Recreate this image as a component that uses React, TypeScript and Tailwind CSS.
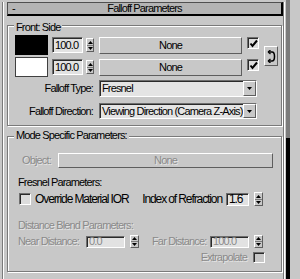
import React from 'react';

// 3ds Max style "Falloff Parameters" rollout

const sunken =
  'border border-t-[#6e6e6e] border-l-[#6e6e6e] border-b-white border-r-white shadow-[inset_1px_1px_0_#2a2a2a]';
const raised =
  'border border-t-white border-l-white border-b-[#5e5e5e] border-r-[#5e5e5e] bg-[#c8c8c8]';
const dim = 'text-[#8a8a8a] [text-shadow:1px_1px_0_#e4e4e4]';

const Field = ({ value, className, disabled }: { value: string; className: string; disabled?: boolean }) => (
  <div className={`flex-none flex items-center pl-[2px] overflow-hidden bg-[#e2e2e2] ${sunken} ${disabled ? dim : ''} ${className}`}>
    {value}
  </div>
);

const Spinner = ({ className }: { className: string }) => (
  <div className={`flex-none flex flex-col items-center justify-center gap-[1px] ${raised} ${className}`}>
    <svg width="5" height="3" viewBox="0 0 5 3">
      <path d="M2.5 0 L5 3 H0 Z" fill="#000" />
    </svg>
    <div className="w-full h-px bg-[#7a7a7a]" />
    <svg width="5" height="3" viewBox="0 0 5 3">
      <path d="M0 0 H5 L2.5 3 Z" fill="#000" />
    </svg>
  </div>
);

const Button = ({ children, className, disabled }: { children: React.ReactNode; className: string; disabled?: boolean }) => (
  <div className={`flex-none flex items-center justify-center ${raised} ${disabled ? dim : ''} ${className}`}>
    {children}
  </div>
);

const Check = ({ checked, className, disabled }: { checked?: boolean; className: string; disabled?: boolean }) => (
  <div className={`flex-none flex items-center justify-center ${sunken} ${disabled ? 'bg-[#c8c8c8]' : 'bg-[#dcdcdc]'} ${className}`}>
    {checked && (
      <svg width="9" height="9" viewBox="0 0 9 9">
        <path d="M1.5 4.5 L3.5 7 L8 1.5" fill="none" stroke="#000" strokeWidth="2" />
      </svg>
    )}
  </div>
);

const Dropdown = ({ children, className }: { children: React.ReactNode; className: string }) => (
  <div className={`flex-none flex items-stretch bg-[#e4e4e4] ${sunken} ${className}`}>
    <span className="flex-1 pl-[2px] flex items-center overflow-hidden">{children}</span>
    <div className={`w-[13px] flex-none flex items-center justify-center ${raised}`}>
      <svg width="5" height="3" viewBox="0 0 5 3">
        <path d="M0 0 H5 L2.5 3 Z" fill="#000" />
      </svg>
    </div>
  </div>
);

const ColorRow = ({ swatch }: { swatch: string }) => (
  <div className="flex items-start">
    <div className={`flex-none w-[33px] h-[20px] border ${swatch}`} />
    <Field value="100.0" className="ml-[4px] mt-[2px] w-[31px] h-[16px]" />
    <Spinner className="ml-[3px] mt-[3px] w-[8px] h-[14px]" />
    <Button className="ml-[5px] mt-[2px] w-[143px] h-[17px]">None</Button>
    <Check checked className="ml-[5px] mt-[2px] w-[12px] h-[12px]" />
  </div>
);

const groupBox = 'ml-[3px] w-[275px] flex-none border border-[#7a7a7a] shadow-[inset_1px_1px_0_#fff,1px_1px_0_#fff]';

export default function App() {
  return (
    <div className="w-[300px] h-[279px] bg-[#c8c8c8] flex overflow-hidden whitespace-nowrap text-[11px] tracking-[-0.85px] leading-none text-black font-['Liberation_Sans',Arial,sans-serif]">
      {/* rollout frame */}
      <div className="mt-[2px] ml-[2px] w-[283px] flex-none border-l border-r border-l-[#7a7a7a] border-r-white">
        <div className="h-full flex flex-col border-l border-r border-l-white border-r-[#7a7a7a]">
          {/* title bar */}
          <div className="ml-[3px] w-[276px] h-[14px] flex-none grid grid-cols-[16px_1fr_16px] items-center bg-[#b4b4b4] border border-t-[#505050] border-l-[#505050] border-b-2 border-r-2 border-b-black border-r-black">
            <span className="pl-[4px]">-</span>
            <span className="text-center">Falloff Parameters</span>
            <span />
          </div>

          {/* Front : Side */}
          <div className={`mt-[9px] pb-[6px] ${groupBox}`}>
            <div className="-mt-[4px] ml-[6px] px-[2px] w-fit bg-[#c8c8c8]">Front: Side</div>
            <div className="mt-[2px] ml-[7px] flex items-start">
              <div className="flex flex-col gap-[2px]">
                <ColorRow swatch="bg-black border-black" />
                <ColorRow swatch="bg-white border-[#404040]" />
              </div>
              <Button className="ml-[5px] mt-[11px] w-[14px] h-[20px]">
                <svg width="9" height="13" viewBox="0 0 9 13">
                  <path d="M1.5 2 H5 Q7.5 2 7.5 6.5 Q7.5 11 5 11 H1.5" fill="none" stroke="#000" strokeWidth="1.5" />
                  <path d="M1 2 L3.5 0 M1 2 L3.5 4 M1 11 L3.5 9 M1 11 L3.5 13" fill="none" stroke="#000" strokeWidth="1.2" />
                </svg>
              </Button>
            </div>
            <div className="mt-[3px] flex items-center">
              <span className="w-[85px] text-right">Falloff Type:</span>
              <Dropdown className="ml-[6px] w-[158px] h-[17px]">Fresnel</Dropdown>
            </div>
            <div className="mt-[6px] flex items-center">
              <span className="w-[85px] text-right">Falloff Direction:</span>
              <Dropdown className="ml-[6px] w-[158px] h-[16px]">Viewing Direction (Camera Z-Axis)</Dropdown>
            </div>
          </div>

          {/* Mode Specific Parameters */}
          <div className={`mt-[10px] h-[136px] ${groupBox}`}>
            <div className="-mt-[7px] ml-[6px] px-[2px] w-fit bg-[#c8c8c8]">Mode Specific Parameters:</div>
            <div className="mt-[12px] flex items-center">
              <span className={`ml-[14px] w-[36px] ${dim}`}>Object:</span>
              <Button disabled className="w-[215px] h-[15px]">None</Button>
            </div>
            <div className="mt-[9px] ml-[10px]">Fresnel Parameters:</div>
            <div className="mt-[4px] flex items-center text-[12px] tracking-[-1.1px]">
              <Check className="ml-[11px] w-[12px] h-[12px]" />
              <span className="ml-[4px]">Override Material IOR</span>
              <span className="ml-auto">Index of Refraction</span>
              <Field value="1.6" className="ml-[4px] w-[23px] h-[13px]" />
              <Spinner className="ml-[5px] mr-[18px] w-[9px] h-[14px]" />
            </div>
            <div className={`mt-[14px] ml-[10px] ${dim}`}>Distance Blend Parameters:</div>
            <div className="mt-[4px] flex items-center">
              <span className={`ml-[10px] w-[68px] ${dim}`}>Near Distance:</span>
              <Field disabled value="0.0" className="w-[39px] h-[12px]" />
              <Spinner className="ml-[5px] w-[9px] h-[13px]" />
              <span className={`ml-[13px] w-[58px] ${dim}`}>Far Distance:</span>
              <Field disabled value="100.0" className="w-[39px] h-[12px]" />
              <Spinner className="ml-[5px] w-[9px] h-[13px]" />
            </div>
            <div className="mt-[4px] flex items-center justify-end">
              <span className={dim}>Extrapolate</span>
              <Check disabled className="ml-[6px] mr-[16px] w-[12px] h-[11px]" />
            </div>
          </div>
        </div>
      </div>

      {/* scrollbar */}
      <div className="ml-[1px] w-[4px] flex-none flex flex-col">
        <div className="h-[138px] bg-[#7c7c7c]" />
        <div className="flex-1 bg-black" />
      </div>
    </div>
  );
}
